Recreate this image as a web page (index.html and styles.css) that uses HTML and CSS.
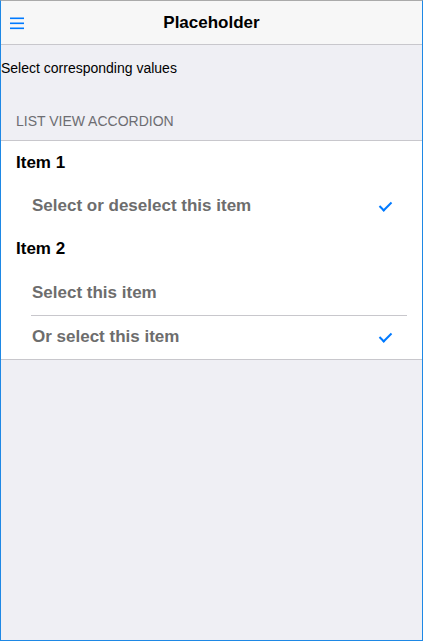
FILE: index.html
```html
<!DOCTYPE html>
<html>
    <head>
        <title>Placeholder</title>
        <meta charset="UTF-8">
        <meta name="viewport" content="width=device-width, initial-scale=1.0">
        <link rel="stylesheet" href="styles.css">
    </head>
    <body>
        <div class="frame">
            <div class="header">
                <span class="menu">
                    <svg width="14" height="13" viewBox="0 0 14 13">
                        <rect x="0" y="0.5" width="14" height="1.6" fill="#007aff"/>
                        <rect x="0" y="5.5" width="14" height="1.6" fill="#007aff"/>
                        <rect x="0" y="10.5" width="14" height="1.6" fill="#007aff"/>
                    </svg>
                </span>
                <span class="title">Placeholder</span>
            </div>
            <p class="intro">Select corresponding values</p>
            <div class="list-label">List View Accordion</div>
            <div class="list">
                <div class="row group">Item 1</div>
                <div class="row sub">Select or deselect this item<span class="check"></span></div>
                <div class="row group">Item 2</div>
                <div class="row sub">Select this item</div>
                <div class="sep"></div>
                <div class="row sub">Or select this item<span class="check"></span></div>
            </div>
        </div>
    </body>
</html>
```
FILE: styles.css
```css
html,body{margin:0; height:100%;}

body{font-family:"Liberation Sans", Arial, sans-serif;}

.frame{
    box-sizing:border-box;
    height:100vh;
    background:#efeff4;
    border:1px solid #1e88e5;
    border-top-color:#aaaaaa;
}

.header{
    height:43px;
    background:#f7f7f7;
    border-bottom:1px solid #c8c7cc;
    display:flex;
    align-items:center;
    justify-content:center;
    position:relative;
}

.menu{
    position:absolute;
    left:9px; top:16px;
    line-height:0;
}

.title{font-size:17px; font-weight:bold; color:#000;}

.intro{
    margin:15px 0 0;
    font-size:14px;
    line-height:16px;
    color:#000;
}

.list-label{
    padding:37px 15px 11px;
    font-size:14px;
    line-height:16px;
    text-transform:uppercase;
    color:#6d6d72;
}

.list{
    background:#fff;
    border-top:1px solid #c8c7cc;
    border-bottom:1px solid #c8c7cc;
}

.row{
    box-sizing:border-box;
    height:43.4px;
    display:flex;
    align-items:center;
    font-size:17px;
    font-weight:bold;
}

.group{padding-left:15px; color:#000;}

.sub{padding-left:31px; padding-right:29px; color:#6d6d6d;}

.sep{height:1px; background:#c8c7cc; margin:0 15px 0 30px;}

.check{
    margin-left:auto;
    width:5px; height:10px;
    border-right:2px solid #007aff;
    border-bottom:2px solid #007aff;
    transform:translate(-4px,-1px) rotate(45deg);
}
```
